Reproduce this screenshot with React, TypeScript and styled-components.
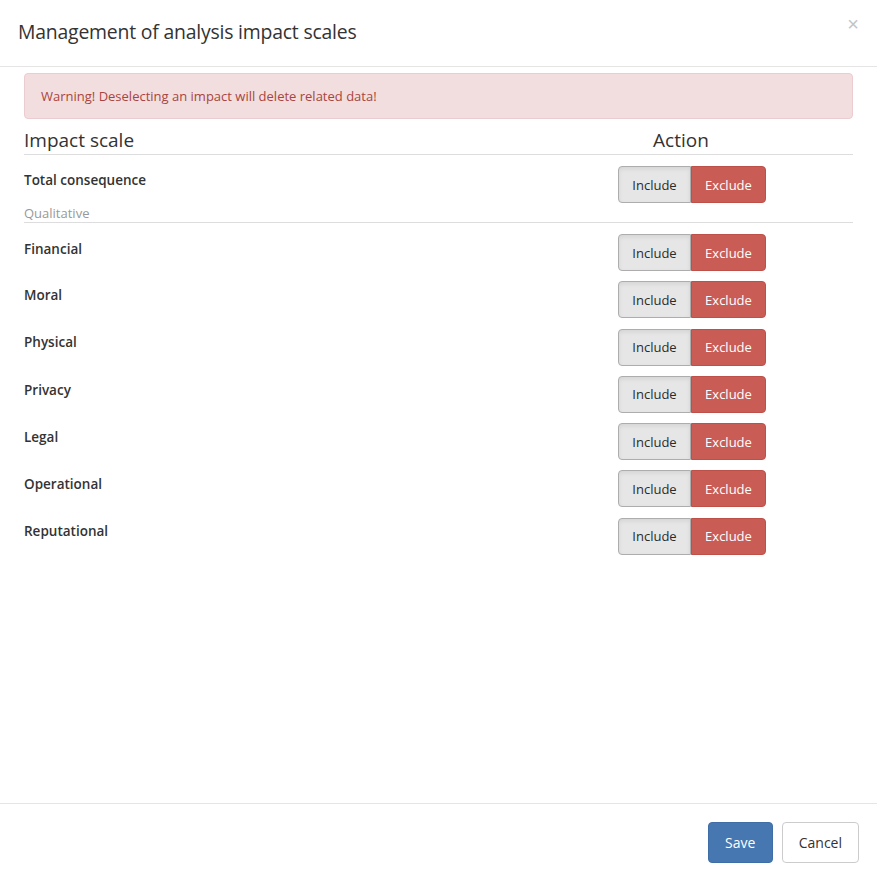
import React from "react";
import styled, { createGlobalStyle } from "styled-components";

const Global = createGlobalStyle`
  html, body { margin: 0; padding: 0; background: #fff; }
  body { font-family: "Open Sans", "Liberation Sans", sans-serif; color: #333; }
  * { box-sizing: border-box; }
`;

const Modal = styled.div`
  width: 877px;
  height: 880px;
  display: flex;
  flex-direction: column;
  background: #fff;
`;

const Header = styled.div`
  height: 67px;
  border-bottom: 1px solid #e5e5e5;
  display: flex;
  align-items: center;
  justify-content: space-between;
  padding: 0 18px 4px 18px;
`;

const Title = styled.h4`
  margin: 0;
  font-size: 19.4px;
  font-weight: 400;
  color: #333;
  letter-spacing: -0.2px;
`;

const Close = styled.button`
  border: none;
  background: none;
  font-size: 20px;
  color: #c4c4c4;
  padding: 0;
  margin-top: -14px;
  font-family: "Liberation Sans", sans-serif;
`;

const Body = styled.div`
  flex: 1;
  padding: 6px 24px 0 24px;
`;

const Alert = styled.div`
  background: #f2dede;
  border: 1px solid #ebccd1;
  border-radius: 4px;
  color: #a94442;
  font-size: 13px;
  height: 46px;
  display: flex;
  align-items: center;
  padding: 0 16px;
`;

const Grid = styled.div`
  display: grid;
  grid-template-columns: 1fr 148px 87px;
`;

const HeadCell = styled.div<{ $center?: boolean }>`
  font-size: 19px;
  color: #333;
  height: 36px;
  display: flex;
  align-items: flex-end;
  padding-bottom: 1px;
  justify-content: ${(p) => (p.$center ? "center" : "flex-start")};
  padding-right: ${(p) => (p.$center ? "22px" : "0")};
  border-bottom: 1px solid #ddd;
`;

const Label = styled.div<{ $top: number }>`
  font-size: 13.5px;
  font-weight: 600;
  color: #333;
  padding-top: ${(p) => p.$top}px;
  line-height: 18px;
`;

const Sub = styled.div`
  grid-column: 1 / -1;
  font-size: 13px;
  color: #999;
  border-bottom: 1px solid #ddd;
  height: 20px;
  line-height: 18px;
  padding-top: 1px;
`;

const Cell = styled.div<{ $top: number }>`
  padding-top: ${(p) => p.$top}px;
`;

const Group = styled.div`
  display: flex;
  height: 37px;
`;

const Btn = styled.button<{ $danger?: boolean }>`
  flex: ${(p) => (p.$danger ? "0 0 75px" : "0 0 73px")};
  height: 37px;
  font-family: inherit;
  font-size: 13px;
  border: 1px solid ${(p) => (p.$danger ? "#bf4f49" : "#adadad")};
  background: ${(p) => (p.$danger ? "#c95c55" : "#e6e6e6")};
  color: ${(p) => (p.$danger ? "#fff" : "#2b2b2b")};
  border-radius: ${(p) => (p.$danger ? "0 4px 4px 0" : "4px 0 0 4px")};
  box-shadow: ${(p) => (p.$danger ? "none" : "inset 0 2px 4px rgba(0,0,0,0.08)")};
  padding: 0;
`;

const Footer = styled.div`
  height: 77px;
  border-top: 1px solid #e5e5e5;
  display: flex;
  justify-content: flex-end;
  align-items: center;
  gap: 9px;
  padding: 0 18px 0 0;
`;

const FootBtn = styled.button<{ $primary?: boolean }>`
  height: 41px;
  padding: 0 16px;
  min-width: ${(p) => (p.$primary ? "65px" : "77px")};
  font-family: inherit;
  font-size: 14px;
  border-radius: 4px;
  border: 1px solid ${(p) => (p.$primary ? "#3f6ea6" : "#ccc")};
  background: ${(p) => (p.$primary ? "#4677b1" : "#fff")};
  color: ${(p) => (p.$primary ? "#fff" : "#333")};
`;

const rows = ["Financial", "Moral", "Physical", "Privacy", "Legal", "Operational", "Reputational"];

const Toggle = () => (
  <Group>
    <Btn>Include</Btn>
    <Btn $danger>Exclude</Btn>
  </Group>
);

export default function App() {
  return (
    <>
      <Global />
      <Modal>
        <Header>
          <Title>Management of analysis impact scales</Title>
          <Close>×</Close>
        </Header>
        <Body>
          <Alert>Warning! Deselecting an impact will delete related data!</Alert>
          <Grid>
            <HeadCell>Impact scale</HeadCell>
            <HeadCell $center>Action</HeadCell>
            <HeadCell />
            <Label $top={16}>Total consequence</Label>
            <Cell $top={11}>
              <Toggle />
            </Cell>
            <div />
            <Sub>Qualitative</Sub>
            {rows.map((r, i) => (
              <React.Fragment key={r}>
                <Label $top={i === 0 ? 17 : 15}>{r}</Label>
                <Cell $top={i === 0 ? 11 : 10.3}>
                  <Toggle />
                </Cell>
                <div />
              </React.Fragment>
            ))}
          </Grid>
        </Body>
        <Footer>
          <FootBtn $primary>Save</FootBtn>
          <FootBtn>Cancel</FootBtn>
        </Footer>
      </Modal>
    </>
  );
}
